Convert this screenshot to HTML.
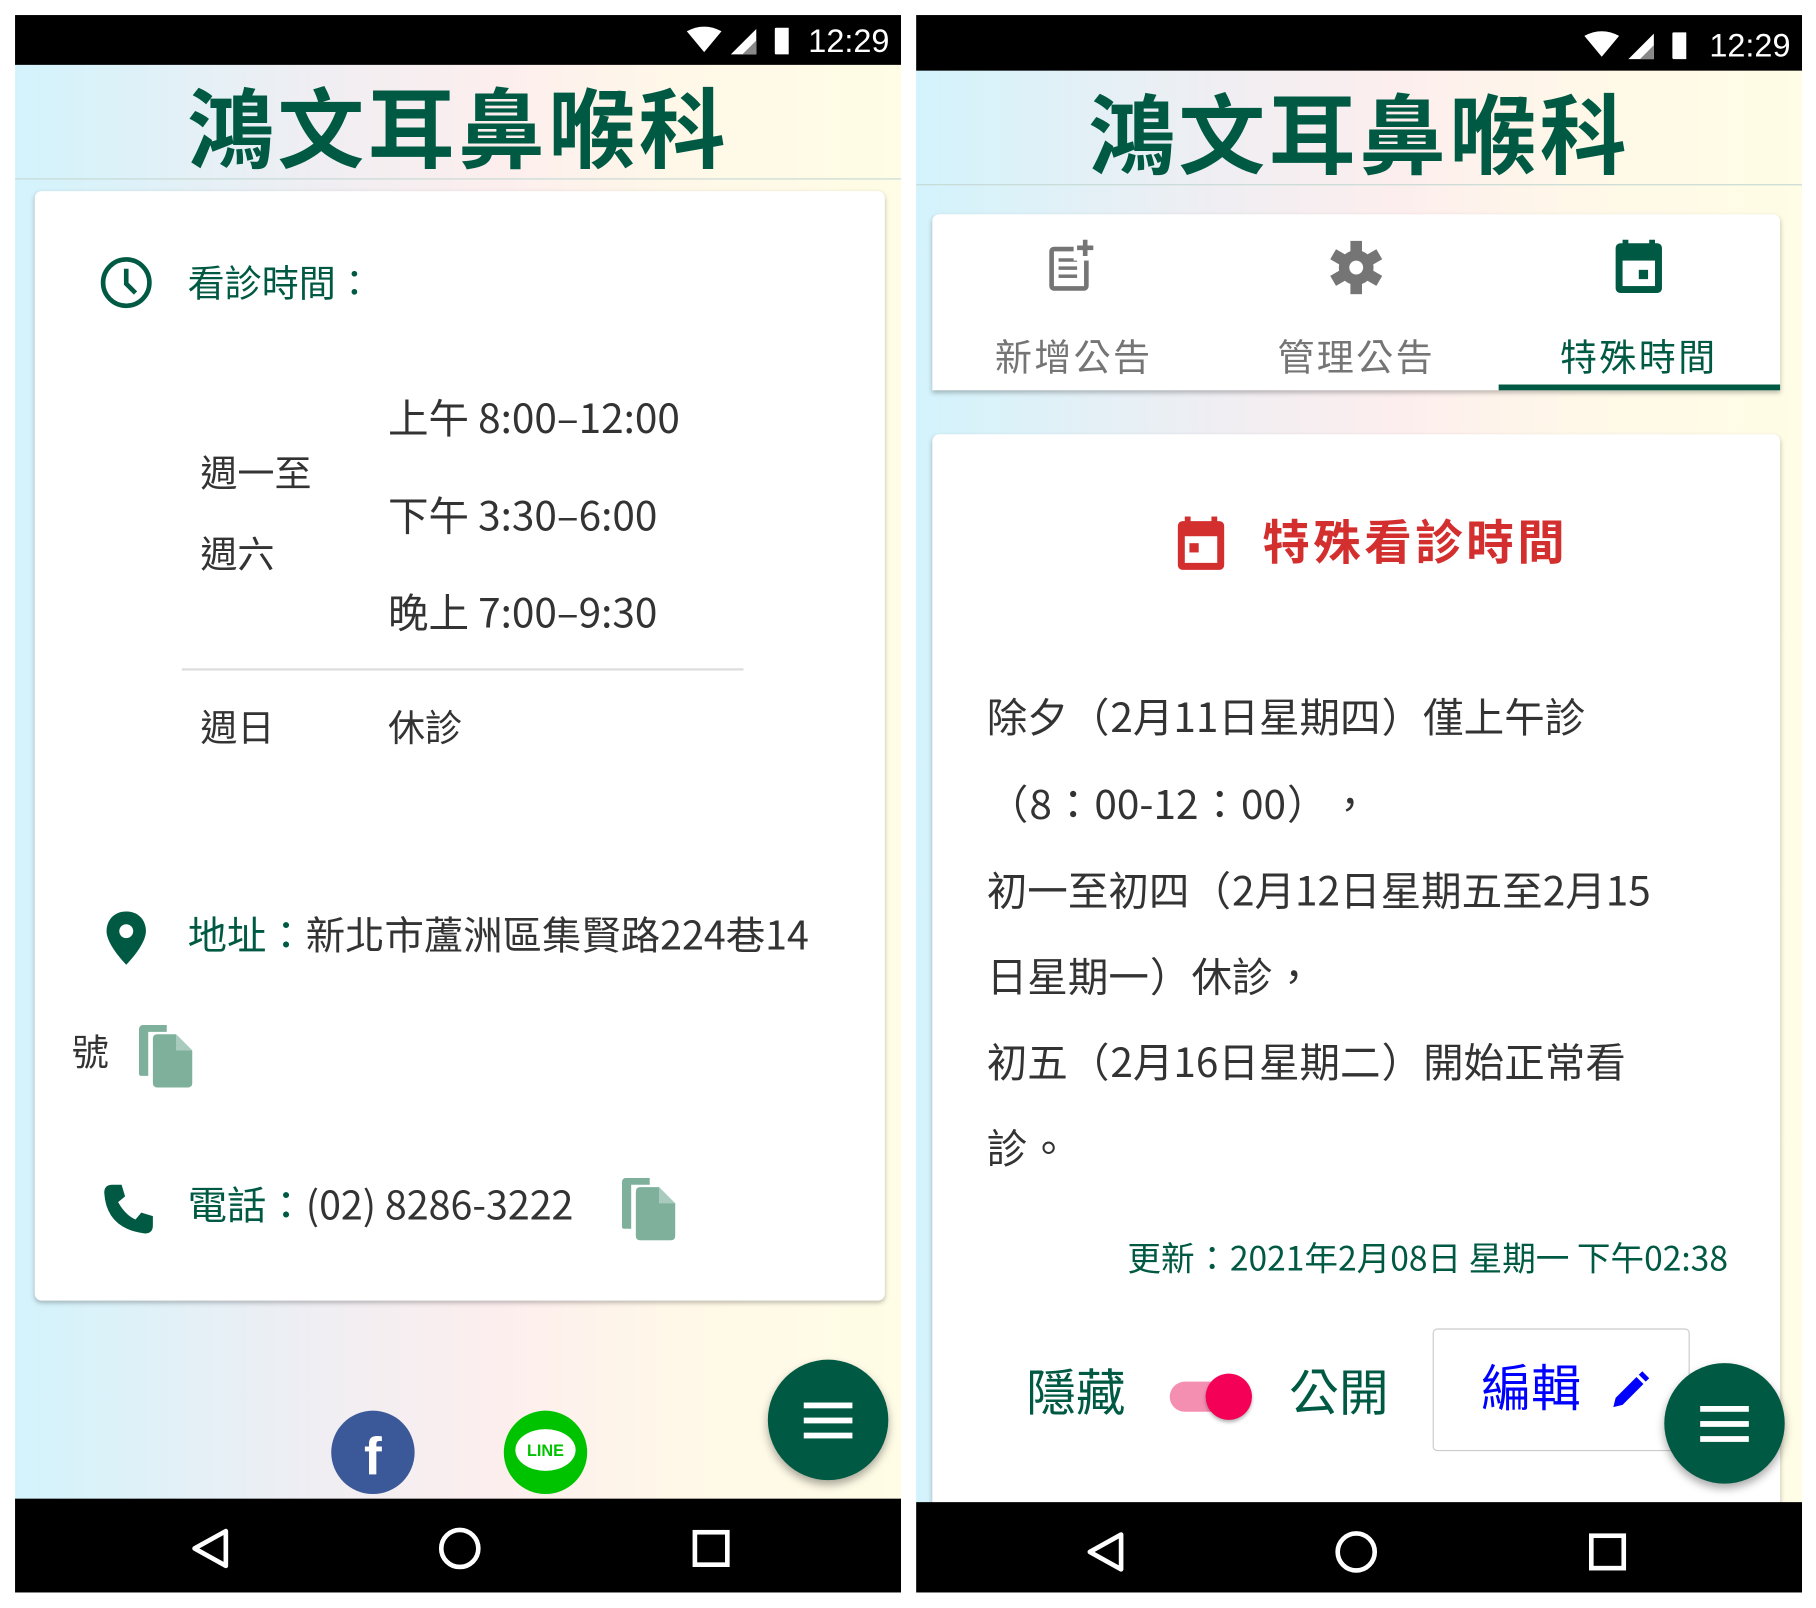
<!DOCTYPE html>
<html><head><meta charset="utf-8">
<style>
html,body{margin:0;padding:0;background:#fff;width:1816px;height:1608px;overflow:hidden;}
#w{position:absolute;left:0;top:0;width:1568px;height:1388px;transform:scale(1.15816);transform-origin:0 0;font-family:"Noto Sans CJK TC","Liberation Sans",sans-serif;}
.a{position:absolute;}
.phone{position:absolute;top:13px;width:765px;height:1362px;background:linear-gradient(90deg,#d3f3fc 0%,#f0eef2 35%,#fdeeee 55%,#fff8e8 75%,#fffde6 100%);overflow:hidden;}
.sb{position:absolute;left:0;top:0;width:100%;background:#000;}
.nav{position:absolute;left:0;bottom:0;width:100%;background:#000;}
.title{position:absolute;left:0;width:100%;text-align:center;font-weight:bold;font-size:75px;line-height:1;color:#005a43;letter-spacing:3px;font-family:"Noto Sans CJK TC",sans-serif;}
.hl{position:absolute;left:0;width:100%;height:1px;background:#c5d9d3;}
.card{position:absolute;background:#fff;border-radius:6px;box-shadow:0 2px 4px rgba(0,0,0,.25);}
.t{position:absolute;white-space:nowrap;line-height:1;}
.g{color:#005a43}.d{color:#333}
.p{display:inline-block;width:1.05em;text-align:center;}
.fab{position:absolute;width:104px;height:104px;border-radius:50%;background:#005a43;box-shadow:0 4px 8px rgba(0,0,0,.35);}
.fab i{position:absolute;left:31px;width:42px;height:5px;background:#fff;}
.time{position:absolute;right:10px;color:#fff;font-size:28px;line-height:1;font-family:"Liberation Sans",sans-serif;}
</style></head><body><div id="w">

<!-- LEFT PHONE -->
<div class="phone" style="left:13px;">
 <div class="sb" style="height:43px;">
  <svg class="a" style="left:578px;top:8px" width="90" height="30"><path d="M2 6 Q17 -2 32 6 L17 24Z" fill="#fff"/><path d="M40 26 L62 26 L62 4Z" fill="#fff"/><path d="M50 26 L62 26 L62 14Z" fill="#888"/><rect x="78" y="3" width="14" height="23" rx="1" fill="#fff"/></svg>
  <div class="time" style="top:9px">12:29</div>
 </div>
 <div class="title" style="top:56px">鴻文耳鼻喉科</div>
 <div class="hl" style="top:141px"></div>
 <div class="card" style="left:17px;top:152px;width:734px;height:958px;">
  <svg class="a" style="left:55px;top:55px" width="50" height="50"><circle cx="24" cy="24" r="20" fill="none" stroke="#005a43" stroke-width="4"/><path d="M24 12 V25 L32 33" fill="none" stroke="#005a43" stroke-width="4"/></svg>
  <div class="t g" style="left:132px;top:62px;font-size:32px">看診時間：</div>
  <div class="t d" style="left:143px;top:226px;font-size:32px">週一至</div>
  <div class="t d" style="left:143px;top:296px;font-size:32px">週六</div>
  <div class="t d" style="left:305px;top:177px;font-size:35px">上午 8:00–12:00</div>
  <div class="t d" style="left:305px;top:261px;font-size:35px">下午 3:30–6:00</div>
  <div class="t d" style="left:305px;top:345px;font-size:35px">晚上 7:00–9:30</div>
  <div class="a" style="left:127px;top:412px;width:485px;height:2px;background:#ddd"></div>
  <div class="t d" style="left:143px;top:446px;font-size:32px">週日</div>
  <div class="t d" style="left:305px;top:446px;font-size:32px">休診</div>
  <svg class="a" style="left:60px;top:620px" width="40" height="52"><path d="M19 2 C8 2 2 10 2 19 C2 31 19 48 19 48 C19 48 36 31 36 19 C36 10 30 2 19 2Z" fill="#005a43"/><circle cx="19" cy="19" r="6" fill="#fff"/></svg>
  <div class="t" style="left:132px;top:624px;font-size:34px"><span class="g">地址：</span><span class="d">新北市蘆洲區集賢路224巷14</span></div>
  <div class="t d" style="left:32px;top:726px;font-size:32px">號</div>
  <svg class="a" style="left:90px;top:720px" width="48" height="54"><path d="M0 4 Q0 0 4 0 H24 V6 H8 V44 H2 Q0 44 0 42Z" fill="#7fb09c"/><path d="M12 12 Q12 8 16 8 H32 L46 22 V50 Q46 54 42 54 H16 Q12 54 12 50Z" fill="#7fb09c"/><path d="M32 8 V22 H46" fill="#a9cbbd"/></svg>
  <svg class="a" style="left:58px;top:856px" width="46" height="46"><path d="M9 2 L17 2 L20 12 L14 17 Q20 28 29 32 L34 26 L44 29 L44 37 Q44 44 37 44 Q4 40 2 9 Q2 2 9 2Z" fill="#005a43"/></svg>
  <div class="t" style="left:132px;top:857px;font-size:34px"><span class="g">電話：</span><span class="d">(02) 8286-3222</span></div>
  <svg class="a" style="left:507px;top:852px" width="48" height="54"><path d="M0 4 Q0 0 4 0 H24 V6 H8 V44 H2 Q0 44 0 42Z" fill="#7fb09c"/><path d="M12 12 Q12 8 16 8 H32 L46 22 V50 Q46 54 42 54 H16 Q12 54 12 50Z" fill="#7fb09c"/><path d="M32 8 V22 H46" fill="#a9cbbd"/></svg>
 </div>
 <div class="a" style="left:273px;top:1205px;width:72px;height:72px;border-radius:50%;background:#3b5998;color:#fff;font-weight:bold;font-size:46px;text-align:center;line-height:78px;font-family:'Liberation Sans',sans-serif">f</div>
 <div class="a" style="left:422px;top:1205px;width:72px;height:72px;border-radius:50%;background:#00c300;"><div class="a" style="left:10px;top:16px;width:52px;height:36px;border-radius:50%;background:#fff;color:#00c300;font-size:14px;font-weight:bold;text-align:center;line-height:36px;font-family:'Liberation Sans',sans-serif">LINE</div></div>
 <div class="fab" style="left:650px;top:1161px"><i style="top:37px"></i><i style="top:50px"></i><i style="top:63px"></i></div>
 <div class="nav" style="height:81px;">
  <svg class="a" style="left:0;top:0" width="765" height="81"><path d="M182 28 L155 43 L182 58Z" fill="none" stroke="#fff" stroke-width="4" stroke-linejoin="round"/><circle cx="384" cy="43" r="16" fill="none" stroke="#fff" stroke-width="4"/><rect x="587" y="29" width="28" height="28" fill="none" stroke="#fff" stroke-width="4"/></svg>
 </div>
</div>

<!-- RIGHT PHONE -->
<div class="phone" style="left:791px;">
 <div class="sb" style="height:48px;">
  <svg class="a" style="left:575px;top:12px" width="90" height="30"><path d="M2 6 Q17 -2 32 6 L17 24Z" fill="#fff"/><path d="M40 26 L62 26 L62 4Z" fill="#fff"/><path d="M50 26 L62 26 L62 14Z" fill="#888"/><rect x="78" y="3" width="14" height="23" rx="1" fill="#fff"/></svg>
  <div class="time" style="top:13px">12:29</div>
 </div>
 <div class="title" style="top:61px">鴻文耳鼻喉科</div>
 <div class="hl" style="top:146px"></div>
 <div class="card" style="left:14px;top:172px;width:732px;height:152px;border-radius:6px 6px 0 0;">
  <svg class="a" style="left:100px;top:20px" width="46" height="48"><rect x="3" y="10" width="30" height="34" rx="2" fill="none" stroke="#757575" stroke-width="4"/><rect x="9" y="18" width="16" height="3" fill="#757575"/><rect x="9" y="25" width="16" height="3" fill="#757575"/><rect x="9" y="32" width="16" height="3" fill="#757575"/><rect x="22" y="4" width="18" height="16" fill="#fff"/><path d="M32 2 V16 M25 9 H39" stroke="#757575" stroke-width="4"/></svg>
  <svg class="a" style="left:342px;top:22px" width="48" height="48"><g transform="translate(24,24)" fill="#757575"><circle r="15"/><rect x="-5" y="-23" width="10" height="46"/><rect x="-5" y="-23" width="10" height="46" transform="rotate(60)"/><rect x="-5" y="-23" width="10" height="46" transform="rotate(120)"/><circle r="6" fill="#fff"/></g></svg>
  <svg class="a" style="left:588px;top:18px" width="44" height="52"><rect x="2" y="7" width="40" height="43" rx="4" fill="#005a43"/><rect x="8" y="22" width="28" height="22" fill="#fff"/><rect x="8" y="4" width="5" height="8" fill="#005a43"/><rect x="31" y="4" width="5" height="8" fill="#005a43"/><rect x="22" y="30" width="8" height="8" fill="#005a43"/></svg>
  <div class="t" style="left:0;width:244px;text-align:center;top:106px;font-size:32px;color:#757575;letter-spacing:2px">新增公告</div>
  <div class="t" style="left:244px;width:244px;text-align:center;top:106px;font-size:32px;color:#757575;letter-spacing:2px">管理公告</div>
  <div class="t g" style="left:488px;width:244px;text-align:center;top:106px;font-size:32px;letter-spacing:2px">特殊時間</div>
  <div class="a" style="left:489px;top:147px;width:243px;height:5px;background:#005a43"></div>
 </div>
 <div class="card" style="left:14px;top:362px;width:732px;height:960px;">
  <svg class="a" style="left:210px;top:68px" width="44" height="50"><rect x="2" y="7" width="40" height="42" rx="4" fill="#d32f2f"/><rect x="8" y="20" width="28" height="23" fill="#fff"/><rect x="8" y="3" width="5" height="8" fill="#d32f2f"/><rect x="31" y="3" width="5" height="8" fill="#d32f2f"/><rect x="12" y="26" width="8" height="8" fill="#d32f2f"/></svg>
  <div class="t" style="left:285px;top:70px;font-size:41px;font-weight:bold;color:#d32f2f;letter-spacing:3px">特殊看診時間</div>
  <div class="t d" style="left:47px;top:225px;font-size:35px">除夕<span class="p">（</span>2月11日星期四<span class="p">）</span>僅上午診</div>
  <div class="t d" style="left:47px;top:300px;font-size:35px"><span class="p">（</span>8<span class="p">：</span>00-12<span class="p">：</span>00<span class="p">）</span><span class="p">，</span></div>
  <div class="t d" style="left:47px;top:375px;font-size:35px">初一至初四<span class="p">（</span>2月12日星期五至2月15</div>
  <div class="t d" style="left:47px;top:449px;font-size:35px">日星期一<span class="p">）</span>休診<span class="p">，</span></div>
  <div class="t d" style="left:47px;top:523px;font-size:35px">初五<span class="p">（</span>2月16日星期二<span class="p">）</span>開始正常看</div>
  <div class="t d" style="left:47px;top:597px;font-size:35px">診<span class="p">。</span></div>
  <div class="t g" style="right:45px;top:696px;font-size:29px">更新<span class="p">：</span>2021年2月08日 星期一 下午02:38</div>
  <div class="t g" style="left:81px;top:804px;font-size:43px">隱藏</div>
  <div class="a" style="left:205px;top:818px;width:58px;height:26px;border-radius:13px;background:#f48fb1"></div>
  <div class="a" style="left:236px;top:811px;width:40px;height:40px;border-radius:50%;background:#f50057;box-shadow:0 2px 3px rgba(0,0,0,.3)"></div>
  <div class="t g" style="left:308px;top:804px;font-size:43px">公開</div>
  <div class="a" style="left:432px;top:772px;width:220px;height:104px;border:1.5px solid #ccc;border-radius:4px;background:#fff"></div>
  <div class="t" style="left:474px;top:800px;font-size:43px;color:#0000ff">編輯</div>
  <svg class="a" style="left:584px;top:808px" width="36" height="36"><path d="M4 32 L6 24 L24 6 L30 12 L12 30Z" fill="#0000ff"/><path d="M26 4 L29 1 L35 7 L32 10Z" fill="#0000ff"/></svg>
 </div>
 <div class="fab" style="left:646px;top:1164px"><i style="top:37px"></i><i style="top:50px"></i><i style="top:63px"></i></div>
 <div class="nav" style="height:78px;">
  <svg class="a" style="left:0;top:0" width="765" height="78"><path d="M177 28 L150 43 L177 58Z" fill="none" stroke="#fff" stroke-width="4" stroke-linejoin="round"/><circle cx="380" cy="43" r="16" fill="none" stroke="#fff" stroke-width="4"/><rect x="583" y="29" width="28" height="28" fill="none" stroke="#fff" stroke-width="4"/></svg>
 </div>
</div>

</div></body></html>
